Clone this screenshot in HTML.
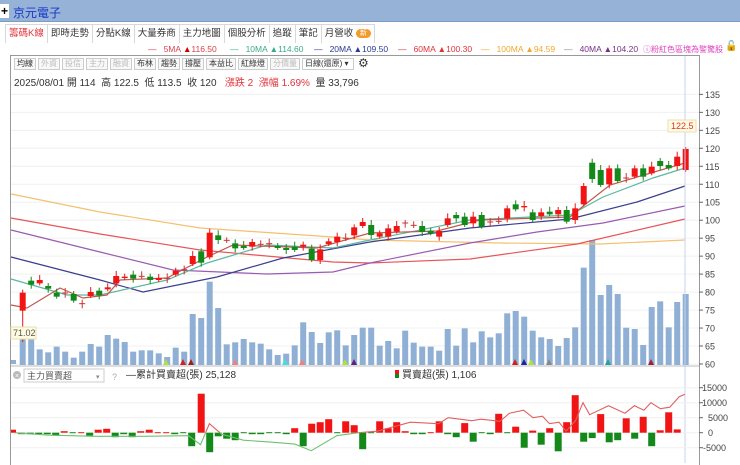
<!DOCTYPE html>
<html><head><meta charset="utf-8">
<style>
*{margin:0;padding:0;box-sizing:border-box}
body{width:740px;height:463px;overflow:hidden;background:#fff;font-family:"Liberation Sans","Noto Sans CJK TC",sans-serif;position:relative;font-size:11px;color:#333}
.top{position:absolute;left:0;top:0;width:740px;height:22px;background:#96b3d7;border-bottom:1px solid #7d9cc4}
.plus{position:absolute;left:0;top:4px;width:9px;height:14px;background:#fff;font-size:12px;line-height:14px;text-align:center;color:#000;font-weight:bold}
.title{position:absolute;left:13px;top:4px;font-size:12px;color:#1636c8}
.tabs{position:absolute;left:5px;top:24px;height:19px;display:flex}
.tab{border:1px solid #d8d8d8;border-bottom:none;padding:0 3px;font-size:9.5px;line-height:18px;color:#333;background:#fff;margin-right:-1px}
.tab.act{color:#e0333a}
.badge{display:inline-block;background:#f39a2a;color:#fff;border-radius:6px;font-size:7px;line-height:9px;padding:0 4px;vertical-align:1px}
.leg{position:absolute;top:44px;font-size:8.5px;white-space:nowrap}
.frame{position:absolute;left:10px;top:55px;width:690px;height:410px;border:1px solid #999;border-bottom:none}
.tb{position:absolute;left:14px;top:58px;display:flex;height:12px}
.tb span{border:1px solid #ccc;font-size:8px;line-height:10px;padding:0 2px;margin-right:2px;color:#333;background:#f8f8f8}
.tb span.dis{color:#bbb}
.info{position:absolute;left:14px;top:74px;font-size:10px;white-space:nowrap}
svg{position:absolute;left:0;top:0}
</style></head><body>
<div class="top"><div class="plus">+</div><div class="title">京元電子</div></div>
<div class="tabs">
<div class="tab act">籌碼K線</div><div class="tab">即時走勢</div><div class="tab">分點K線</div><div class="tab">大量券商</div><div class="tab">主力地圖</div><div class="tab">個股分析</div><div class="tab">追蹤</div><div class="tab">筆記</div><div class="tab">月營收 <span class="badge">新</span></div>
</div>
<div class="leg" style="left:148px;color:#d8434c">—&nbsp;&nbsp; 5MA <span style="color:#c00">▲</span>116.50</div>
<div class="leg" style="left:230px;color:#3aaa8a">—&nbsp;&nbsp; 10MA ▲114.60</div>
<div class="leg" style="left:314px;color:#2b3a8e">—&nbsp;&nbsp; 20MA ▲109.50</div>
<div class="leg" style="left:398px;color:#e0333a">—&nbsp;&nbsp; 60MA ▲100.30</div>
<div class="leg" style="left:481px;color:#f0a830">—&nbsp;&nbsp; 100MA ▲94.59</div>
<div class="leg" style="left:564px;color:#7a2f8a"><span style="color:#888">—</span>&nbsp;&nbsp; 40MA ▲104.20</div>
<div class="leg" style="left:643px;color:#e040c0;font-size:8px">ⓘ粉紅色區塊為警驚股</div>
<div class="leg" style="left:725px;top:41px;color:#000;font-size:10px">🔓</div>
<div class="frame"></div>
<div class="tb"><span>均線</span><span class="dis">外資</span><span class="dis">投信</span><span class="dis">主力</span><span class="dis">融資</span><span>布林</span><span>趨勢</span><span>撐壓</span><span>本益比</span><span>紅綠燈</span><span class="dis">分價量</span><span style="background:#fff;width:52px">日線(還原) ▾</span><span style="border:none;background:none;font-size:12px;line-height:10px">⚙</span></div>
<div class="info">2025/08/01 開 114&nbsp; 高 122.5&nbsp; 低 113.5&nbsp; 收 120&nbsp;&nbsp; <span style="color:#e0333a">漲跌 2&nbsp; 漲幅 1.69%</span>&nbsp; 量 33,796</div>
<svg id="s" width="740" height="463"></svg>
<script>
var S=document.getElementById('s'),h='';
function X(k){return 22.7+8.5*k}
for(var p=60;p<=135;p+=5){var y=364-(p-60)*3.595;h+='<line x1="11" x2="699" y1="'+y+'" y2="'+y+'" stroke="#f0f0f0"/>';h+='<line x1="699" x2="703" y1="'+y+'" y2="'+y+'" stroke="#666"/><text x="705" y="'+(y+3.5)+'" font-size="9" fill="#444" font-family="Liberation Sans">'+p+'</text>';}
var v4=[440,470,508,517,500,515,533,515,492,500,465,476,486,515,511,511,520,531,503,515,402,414,305,384,493,487,477,487,491,508,525,521,496,427,456,489,457,451,496,465,443];
var v5=[683,737,723,745,692,728,740,740,752,687,737,685,727,694,712,700,640,633,650,692,712,717,738,714,682,503,420,585,555,582,683,687,735,621,604,682,606,582];
var vol=[];v4.forEach(function(v){vol.push(180+v/3)});v5.forEach(function(v){vol.push(100+v/3)});
h+='<rect x="11" y="'+(180+540/3)+'" width="5" height="'+(364-180-540/3)+'" fill="#8fb0d4"/>';
vol.forEach(function(y,k){h+='<rect x="'+(X(k)-3)+'" y="'+y+'" width="6" height="'+(365-y)+'" fill="#8fb0d4"/>'});
function pl(pts,c){h+='<polyline fill="none" stroke="'+c+'" stroke-width="1.2" points="'+pts+'"/>'}
pl("11,194 100,212 200,228 333,237 370,240 500,243 600,244 685,240","#f5c070");
pl("11,218 100,234 200,250 333,262 370,263 470,259 577,244 685,219","#e8555a");
pl("11,230 100,252 173,270 267,274 333,272 370,263 470,243 537,232 603,223 685,206","#9a5cb0");
pl("11,257 100,280 143,292 217,277 283,258 370,242 470,228 570,219 637,202 685,186","#3a3f8e");
pl("11,279 67,295 100,295 167,280 207,263 267,245 333,248 370,240 470,220 570,215 603,197 653,178 685,168","#5ab8a0");
pl("11,305 27,308 60,288 83,298 107,295 120,280 167,278 207,257 233,245 317,248 370,233 437,231 480,220 570,217 587,203 610,185 685,163","#c0584a");
var c4=[[338,392,'r'],[302,314,'g'],[300,310,'r'],[318,326,'g'],[338,350,'g'],[339,341,'d'],[342,362,'g'],[371,373,'d'],[336,348,'r'],[332,346,'g'],[322,328,'r'],[288,310,'r'],[290,294,'r'],[284,296,'g'],[289,291,'d'],[290,300,'g'],[294,300,'r'],[295,297,'d'],[272,284,'r'],[269,271,'d'],[228,252,'r'],[214,248,'g'],[158,232,'r'],[166,180,'g'],[181,183,'d'],[190,205,'g'],[198,204,'g'],[186,200,'r'],[193,195,'d'],[191,193,'d'],[198,204,'g'],[204,210,'g'],[200,210,'g'],[194,200,'r'],[206,240,'g'],[208,240,'r'],[184,192,'r'],[170,186,'r'],[175,177,'d'],[142,166,'r'],[126,138,'r']];
var c5=[[375,405,'g'],[400,410,'r'],[385,410,'r'],[378,395,'r'],[369,371,'d'],[376,378,'d'],[378,396,'g'],[392,400,'g'],[393,410,'r'],[355,375,'r'],[345,355,'g'],[350,375,'g'],[350,370,'r'],[345,380,'g'],[366,368,'d'],[364,366,'d'],[325,355,'r'],[313,328,'g'],[318,322,'r'],[337,360,'g'],[337,348,'r'],[335,343,'g'],[330,343,'r'],[330,365,'g'],[325,360,'r'],[258,313,'r'],[188,237,'g'],[210,255,'g'],[205,253,'r'],[205,243,'g'],[234,236,'d'],[205,230,'r'],[205,230,'g'],[200,220,'r'],[183,198,'g'],[195,205,'g'],[170,198,'r'],[147,210,'r']];
var C=[];c4.forEach(function(c){C.push([180+c[0]/3,180+c[1]/3,c[2]])});c5.forEach(function(c){C.push([100+c[0]/3,100+c[1]/3,c[2]])});
C.forEach(function(c,k){var x=X(k),col=c[2]=='r'?'#f01414':c[2]=='g'?'#13891a':'#c33';var t=c[0]-3-(k%3),b=c[1]+2+(k%2)*2;if(k==0)b=342;if(k==78)t=147;
h+='<line x1="'+x+'" x2="'+x+'" y1="'+t+'" y2="'+b+'" stroke="'+col+'"/>';
if(c[2]=='d')h+='<line x1="'+(x-3)+'" x2="'+(x+3)+'" y1="'+c[0]+'" y2="'+c[0]+'" stroke="'+col+'"/>';
else h+='<rect x="'+(x-3)+'" y="'+c[0]+'" width="6" height="'+(c[1]-c[0])+'" fill="'+col+'"/>'});
[[166,'#b0e040'],[183,'#d02020'],[191,'#a02020'],[235,'#f08080'],[285,'#40e0e0'],[302,'#f08080'],[345,'#b0e040'],[354,'#602080'],[515,'#d02020'],[524,'#2020a0'],[531,'#b0e040'],[549,'#888'],[608,'#20a0a0'],[651,'#a02040']].forEach(function(m){h+='<polygon points="'+(m[0]-3)+',365 '+(m[0]+3)+',365 '+m[0]+',359" fill="'+m[1]+'"/>'});
h+='<line x1="685" x2="685" y1="56" y2="463" stroke="#c8d0f0"/>';
h+='<rect x="11" y="327" width="25" height="12" fill="#fffbe0" stroke="#e8e0b0"/><text x="13" y="336" font-size="9" fill="#555" font-family="Liberation Sans">71.02</text>';
h+='<rect x="668" y="120" width="28" height="12" fill="#fffbe0" stroke="#e8e0b0"/><text x="671" y="129" font-size="9" fill="#e0333a" font-family="Liberation Sans">122.5</text>';
h+='<line x1="11" x2="699" y1="366" y2="366" stroke="#bbb"/>';
h+='<circle cx="17" cy="375" r="4" fill="#bbb"/><text x="15" y="378" font-size="7" fill="#fff">×</text>';
h+='<rect x="24" y="369" width="80" height="13" fill="#fff" stroke="#ccc"/><text x="27" y="379" font-size="9" fill="#555" font-family="Liberation Sans,Noto Sans CJK TC">主力買賣超</text><text x="96" y="379" font-size="7" fill="#888">▾</text><text x="112" y="380" font-size="9" fill="#aaa">?</text>';
h+='<text x="126" y="378" font-size="10" fill="#333" font-family="Liberation Sans,Noto Sans CJK TC">—累計買賣超(張) 25,128</text>';
h+='<rect x="395" y="370" width="4" height="4" fill="#f01414"/><rect x="395" y="374" width="4" height="4" fill="#13891a"/><text x="402" y="378" font-size="10" fill="#333" font-family="Liberation Sans,Noto Sans CJK TC">買賣超(張) 1,106</text>';
function vy(v){return 432.7-v*0.003}
[[15000,'15000'],[10000,'10000'],[5000,'5000'],[0,'0'],[-5000,'-5000']].forEach(function(a){var y=vy(a[0]);h+='<line x1="11" x2="699" y1="'+y+'" y2="'+y+'" stroke="#f0f0f0"/><line x1="699" x2="703" y1="'+y+'" y2="'+y+'" stroke="#666"/><text x="'+(a[0]<0?703:(a[0]>=10000?702:708))+'" y="'+(y+3.5)+'" font-size="9" fill="#444" font-family="Liberation Sans">'+a[1]+'</text>'});
var B=[-500,-500,-500,-500,-1000,500,-200,200,-1000,1000,1300,-1500,-500,-1500,500,1000,300,300,-500,-200,-4500,13000,-6500,-1200,-2000,-2500,-200,-500,-500,-300,-200,-500,1500,-4500,3000,3500,4500,-200,3800,2500,-5500,-200,3800,1500,3500,500,-500,-500,300,3800,-500,-1500,3200,-3000,-200,-500,6300,-200,2000,-5000,700,-4000,1500,-6200,3500,12500,-3000,-1800,6200,-3200,-2500,4800,-2000,5300,-4500,800,6800,1100];
h+='<rect x="11" y="'+vy(1000)+'" width="5" height="3" fill="#f01414"/>';
B.forEach(function(v,k){var x=X(k)+(k>20?0:-1);if(Math.abs(v)<=300){h+='<line x1="'+(x-3)+'" x2="'+(x+3)+'" y1="432.7" y2="432.7" stroke="'+(v>0?'#f01414':'#13891a')+'"/>';return}
var y=v>0?vy(v):432.7;h+='<rect x="'+(x-3.5)+'" y="'+y+'" width="7" height="'+Math.abs(v*0.003)+'" fill="'+(v>0?'#f01414':'#13891a')+'"/>'});
var L=[[30,0],[100,-800],[200,-1200],[300,-1200],[400,-1000],[425,-4000],[444,3000],[470,-500],[516,-2500],[580,-3200],[625,-3800],[660,-6000],[714,-1000],[760,0],[800,500],[870,3500],[930,3000],[950,5000],[1000,4000],[1020,4500],[1060,3800],[1080,6500],[1110,7500],[1130,5000],[1150,5500],[1165,3000],[1185,3500],[1200,500],[1220,4000],[1236,10000],[1250,6000],[1290,9000],[1325,6500],[1345,9000],[1365,7500],[1380,10000],[1400,8000],[1420,8500],[1440,12000],[1452,12800]];
var pts=L.map(function(a){return (a[0]/2.12).toFixed(1)+','+vy(a[1]).toFixed(1)}).join(' ');
h+='<defs><clipPath id="ca"><rect x="0" y="380" width="740" height="52.7"/></clipPath><clipPath id="cb"><rect x="0" y="432.7" width="740" height="40"/></clipPath></defs>';
h+='<polyline clip-path="url(#ca)" fill="none" stroke="#e06060" stroke-width="1.1" points="'+pts+'"/><polyline clip-path="url(#cb)" fill="none" stroke="#70c070" stroke-width="1.1" points="'+pts+'"/>';
S.innerHTML=h;
</script>
</body></html>
